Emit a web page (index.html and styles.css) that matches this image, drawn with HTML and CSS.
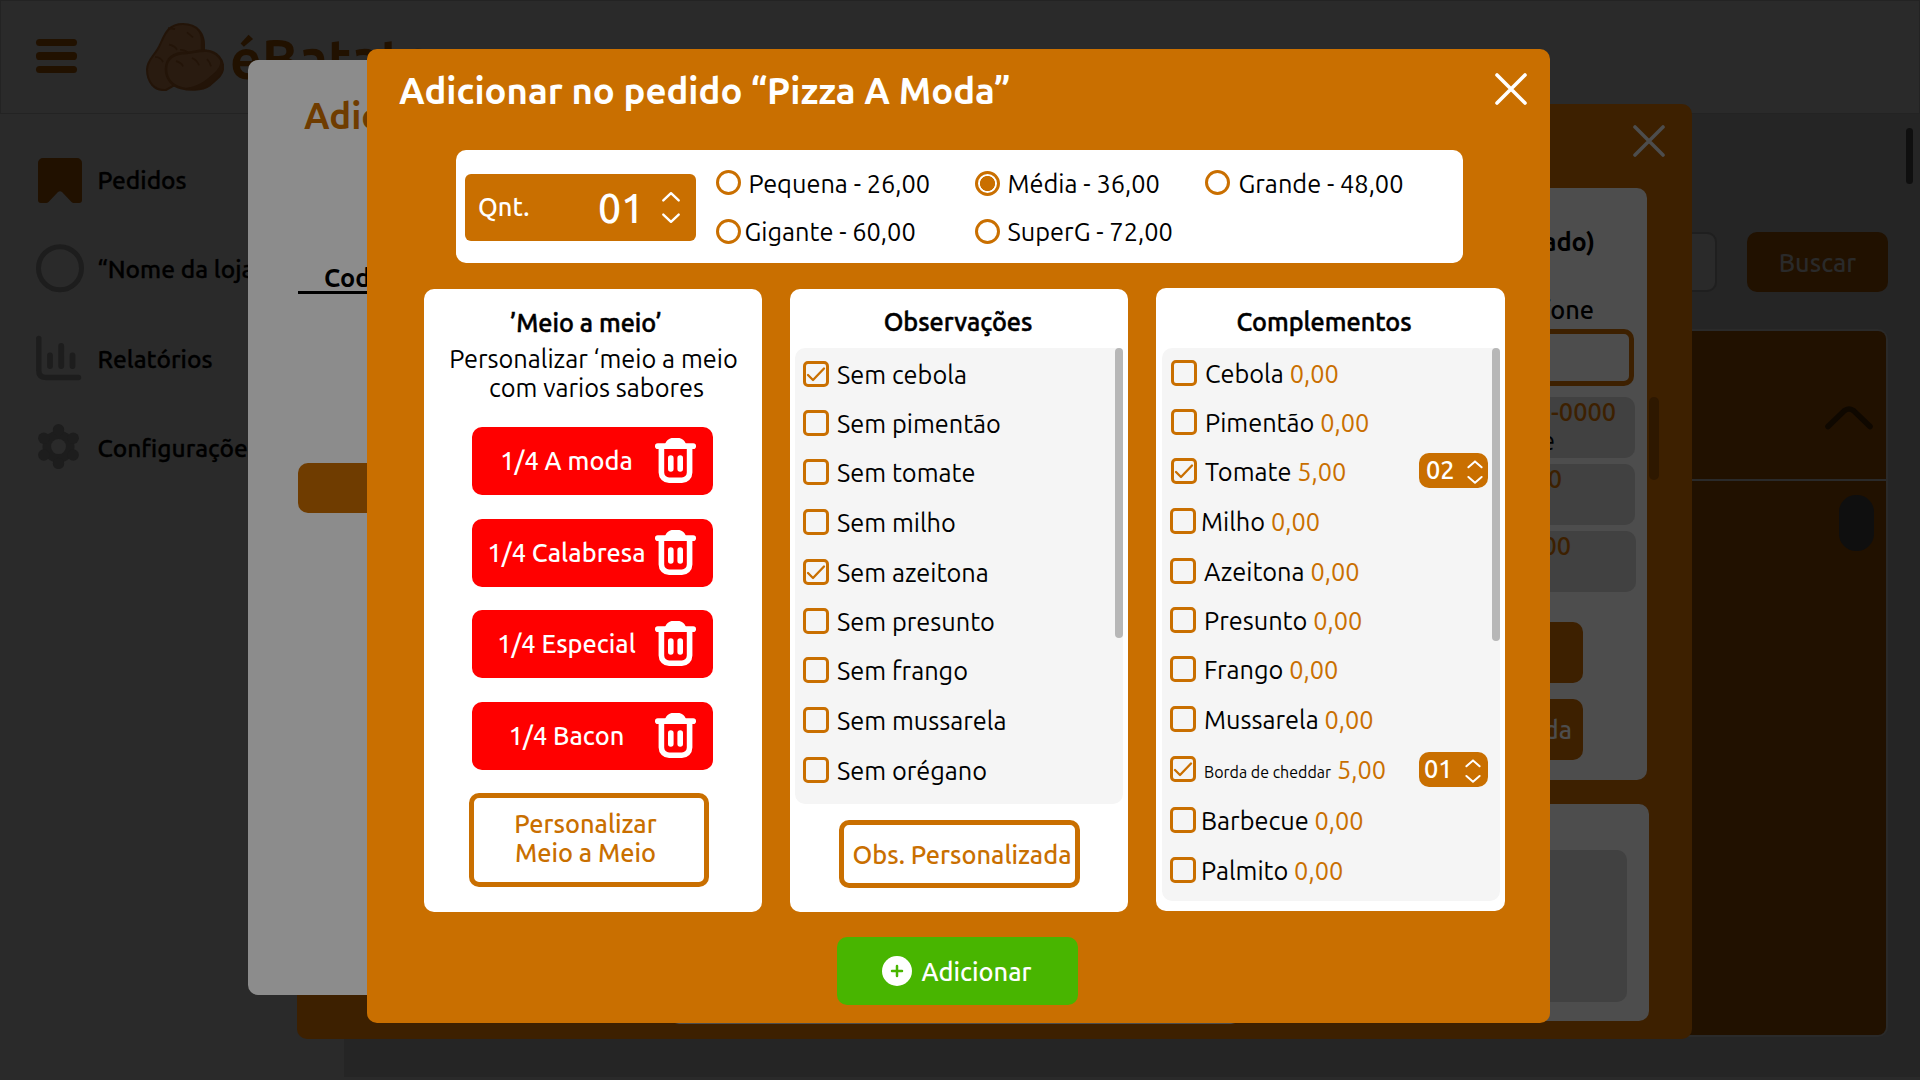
FILE: index.html
```html
<!DOCTYPE html>
<html lang="pt-BR">
<head>
<meta charset="utf-8">
<title>éBatata</title>
<link rel="stylesheet" href="styles.css">
</head>
<body>
<svg class="defs" width="0" height="0">
  <symbol id="trash" viewBox="0 0 41 45">
    <path d="M10 6C11.500 2.500 14 0 18 0h5c4 0 6.500 2.500 8 6z" fill="#fff"/>
    <rect x="0" y="5.300" width="41" height="5.700" rx="2.800" fill="#fff"/>
    <path d="M6.400 9v25.500a7.700 7.700 0 0 0 7.700 7.700h12.800a7.700 7.700 0 0 0 7.700-7.700V9" fill="none" stroke="#fff" stroke-width="5.600"/>
    <path d="M15.800 20v11M25.200 20v11" stroke="#fff" stroke-width="5.600" stroke-linecap="round"/>
  </symbol>
  <symbol id="spin" viewBox="0 0 18 30">
    <path d="M2 8.500 9 2l7 6.500M2 21.500 9 28l7-6.500" fill="none" stroke="#fff" stroke-width="2.200" stroke-linecap="round" stroke-linejoin="round"/>
  </symbol>
  <symbol id="spin-sm" viewBox="0 0 16 24">
    <path d="M1.400 7.300 8 1.400l6.600 5.900M1.400 17 8 22.700l6.600-5.700" fill="none" stroke="#fff" stroke-width="2" stroke-linecap="round" stroke-linejoin="round"/>
  </symbol>
  <symbol id="close" viewBox="0 0 32 32">
    <path d="M2 2l28 28M30 2 2 30" fill="none" stroke="currentColor" stroke-width="3.600" stroke-linecap="round"/>
  </symbol>
  <symbol id="tick" viewBox="0 0 20 20">
    <path d="M2 11l5 5L18 4.500" fill="none" stroke="#c96f00" stroke-width="2.300" stroke-linecap="round" stroke-linejoin="round"/>
  </symbol>
</svg>

<div class="app">
  <header class="topbar">
    <div class="burger"><i></i><i></i><i></i></div>
    <svg class="potato" width="78" height="68" viewBox="0 0 78 66" preserveAspectRatio="none">
      <path d="M1 45C1 36 9 31 13 23 18 14 20 1 37 1c15 0 21 10 21 20l-2 24-36 20C8 66 1 57 1 45z" fill="#291b10" stroke="#231408" stroke-width="2"/>
      <path d="M51 6c6 8 3 15 4 21l4 0c0-8-1-16-8-21z" fill="#231408"/>
      <path d="M20 45c0-12 9-16 21-16 6 0 12-3 20-2 10 1 16 9 16 16 0 7-6 11-13 17-9 6-22 5-29 3-9-2-15-9-15-18z" fill="#291b10" stroke="#231408" stroke-width="2.500"/>
      <path d="M73 32c4 8-1 14-9 20-8 7-16 10-24 11 14 4 24-2 31-9 7-6 8-14 2-22z" fill="#231408"/>
      <path d="M22 5l7 1M41 9l6 5M23 21q6 1 8 5M9 33q6 0 8 5M34 26q5 0 8 3M30 37q5 1 7 5M46 34q5 2 7 7M61 35q3 3 4 7" fill="none" stroke="#231408" stroke-width="1.600"/>
    </svg>
    <span class="brand">éBatata</span>
  </header>
  <div class="body">
    <nav class="side">
      <a><svg width="48" height="50" viewBox="0 0 48 50"><path d="M7 4h34a5 5 0 0 1 5 5v37a3 3 0 0 1-3 3h-5q-1.500 0-2.500-1L26 38q-2-1.500-4 0L12.500 48q-1 1-2.500 1H5a3 3 0 0 1-3-3V9a5 5 0 0 1 5-5z" fill="#211100"/></svg><span>Pedidos</span></a>
      <a><svg width="48" height="50" viewBox="0 0 48 50"><circle cx="24" cy="25.300" r="21.500" fill="none" stroke="#1d1d1d" stroke-width="5"/></svg><span>“Nome da loja”</span></a>
      <a><svg width="48" height="50" viewBox="0 0 48 50"><path d="M2.800 5.500v32q0 7 7 7H42.500" fill="none" stroke="#1d1d1d" stroke-width="5.400" stroke-linecap="round"/><path d="M14 22.500V33M25.200 13v20M36.500 22.500V33" stroke="#1d1d1d" stroke-width="5.800" stroke-linecap="round"/></svg><span>Relatórios</span></a>
      <a><svg width="48" height="50" viewBox="0 0 48 50"><g fill="#1d1d1d"><circle cx="22.500" cy="24.600" r="16"/><circle cx="22.500" cy="7.800" r="5.700"/><circle cx="22.500" cy="41.400" r="5.700"/><circle cx="7.800" cy="16.300" r="5.700"/><circle cx="37.200" cy="16.300" r="5.700"/><circle cx="7.800" cy="33" r="5.700"/><circle cx="37.200" cy="33" r="5.700"/></g><circle cx="22.500" cy="24.600" r="7.500" fill="#2a2a2a"/></svg><span>Configurações</span></a>
    </nav>
    <main class="main">
      <div class="searchrow"><div class="search"></div><div class="find">Buscar</div></div>
      <div class="table">
        <div class="thead"><svg width="48" height="24" viewBox="0 0 48 24"><path d="M3 20.500 19 5q5-4 10 0l16 15.500" fill="none" stroke="#0f0800" stroke-width="5.500" stroke-linecap="round"/></svg></div>
        <div class="tbody"><i></i></div>
      </div>
      <i class="pagescroll"></i>
    </main>
  </div>
</div>

<section class="order">
  <div class="order-head"><svg width="32" height="32"><use href="#close"/></svg></div>
  <div class="order-main">
    <div class="client">
      <div class="c-title">(Cadastrado)</div>
      <div class="c-label">Telefone</div>
      <div class="c-input"></div>
      <div class="c-row r1"><b>(00) 00000-0000</b><span>Nome do cliente</span></div>
      <div class="c-row r2"><b>R$ 00,00</b></div>
      <div class="c-row r3"><b>R$ 00,00</b></div>
      <div class="c-btn"></div>
      <div class="c-btn last">Personalizada</div>
    </div>
    <i class="order-scroll"></i>
  </div>
  <div class="order-foot">
    <div class="foot-left"></div>
    <div class="foot-right"><div></div></div>
  </div>
</section>

<section class="add-list">
  <h2>Adicionar</h2>
  <div class="tab">Codigo</div>
  <div class="bar"></div>
</section>

<section class="modal">
  <div class="head"><h1>Adicionar no pedido “Pizza A Moda”</h1><svg width="32" height="32"><use href="#close"/></svg></div>
  <div class="options">
    <div class="qty"><span>Qnt.</span><strong>01</strong><svg width="20" height="33"><use href="#spin"/></svg></div>
    <div class="sizes">
      <label class="top"><i></i>Pequena - 26,00</label>
      <label class="top on"><i></i>Média - 36,00</label>
      <label class="top wide"><i></i>Grande - 48,00</label>
      <label class="tight"><i></i>Gigante - 60,00</label>
      <label><i></i>SuperG - 72,00</label>
    </div>
  </div>
  <div class="cols">
    <div class="card half">
      <h3>’Meio a meio’</h3>
      <p>Personalizar ‘meio a meio<br><span>com varios sabores</span></p>
      <div class="parts">
        <div class="part"><span>1/4 A moda</span><svg width="41" height="45"><use href="#trash"/></svg></div>
        <div class="part"><span>1/4 Calabresa</span><svg width="41" height="45"><use href="#trash"/></svg></div>
        <div class="part"><span>1/4 Especial</span><svg width="41" height="45"><use href="#trash"/></svg></div>
        <div class="part"><span>1/4 Bacon</span><svg width="41" height="45"><use href="#trash"/></svg></div>
      </div>
      <div class="outline two">Personalizar<br>Meio a Meio</div>
    </div>
    <div class="card obs">
      <h3>Observações</h3>
      <div class="list">
        <div class="rows">
          <label><i><svg width="20" height="20"><use href="#tick"/></svg></i>Sem cebola</label>
          <label><i></i>Sem pimentão</label>
          <label><i></i>Sem tomate</label>
          <label><i></i>Sem milho</label>
          <label><i><svg width="20" height="20"><use href="#tick"/></svg></i>Sem azeitona</label>
          <label><i></i>Sem presunto</label>
          <label><i></i>Sem frango</label>
          <label><i></i>Sem mussarela</label>
          <label><i></i>Sem orégano</label>
        </div>
        <div class="scroll"></div>
      </div>
      <div class="outline">Obs. Personalizada</div>
    </div>
    <div class="card extras">
      <h3>Complementos</h3>
      <div class="list">
        <div class="rows">
          <label class="in"><i></i>Cebola<em> 0,00</em></label>
          <label class="in"><i></i>Pimentão<em> 0,00</em></label>
          <label class="in"><i><svg width="20" height="20"><use href="#tick"/></svg></i>Tomate<em> 5,00</em><span class="step">02<svg width="16" height="24"><use href="#spin-sm"/></svg></span></label>
          <label class="near"><i></i>Milho<em> 0,00</em></label>
          <label><i></i>Azeitona<em> 0,00</em></label>
          <label><i></i>Presunto<em> 0,00</em></label>
          <label><i></i>Frango<em> 0,00</em></label>
          <label><i></i>Mussarela<em> 0,00</em></label>
          <label><i><svg width="20" height="20"><use href="#tick"/></svg></i><small>Borda de cheddar</small><em> 5,00</em><span class="step alt">01<svg width="16" height="24"><use href="#spin-sm"/></svg></span></label>
          <label class="near"><i></i>Barbecue<em> 0,00</em></label>
          <label class="near"><i></i>Palmito<em> 0,00</em></label>
        </div>
        <div class="scroll"></div>
      </div>
    </div>
  </div>
  <div class="add"><svg width="30" height="30" viewBox="0 0 30 30"><circle cx="15" cy="15" r="15" fill="#fff"/><path d="M15 10v10M10 15h10" stroke="#48b500" stroke-width="2.500" stroke-linecap="round"/></svg>Adicionar</div>
</section>
</body>
</html>
```
FILE: styles.css
```css
* { box-sizing: border-box; margin: 0; padding: 0; }
body {
  width: 1920px; height: 1080px; overflow: hidden; position: relative;
  background: #252525; color: #000;
  font: 400 25.33px "Ubuntu", "Noto Sans", "Open Sans", sans-serif;
}
i, em { font-style: normal; }
svg { display: block; flex: none; }
.defs { position: absolute; }

/* page behind the dialogs */
.app { width: 1920px; height: 1080px; display: flex; flex-direction: column; }
.topbar { height: 114px; background: #2a2a2a; border: 1px solid #232323; display: flex; padding-left: 35px; }
.burger { width: 41px; padding-top: 38px; display: flex; flex-direction: column; gap: 6.300px; }
.burger i { height: 7.200px; border-radius: 3.600px; background: #211100; }
.potato { margin: 22px 0 0 69px; }
.brand { margin-left: 6px; font-weight: 700; font-size: 55px; line-height: 115px; height: 112px; color: #211100; }
.body { flex: 1; display: flex; }
.side {
  width: 344px; background: #2a2a2a; padding: 40px 0 0 36px; font-weight: 500; font-size: 24.500px;
  display: grid; grid-template-rows: 89px 90px 89px 50px; align-content: start;
  -webkit-text-stroke: 0.300px #000;
}
.side a { display: flex; gap: 13.500px; line-height: 52px; height: 50px; white-space: nowrap; }
.main { flex: 1; position: relative; border-bottom: 3px solid #2a2a2a; padding: 118px 32px 0 0; }
.searchrow { display: flex; justify-content: flex-end; gap: 30px; }
.search { width: 900px; height: 60px; border: 2px solid #1f1f1f; border-radius: 10px; background: #2a2a2a; }
.find { width: 141px; height: 60px; line-height: 61px; border-radius: 10px; background: #211100; color: #2a2a2a; text-align: center; font-weight: 500; }
.table { margin: 37px 0 0 30px; height: 708px; border: 2px solid #2a2a2a; border-left: 0; border-radius: 10px; background: #211100; }
.thead { height: 150px; border-bottom: 2px solid #2a2a2a; display: flex; justify-content: flex-end; padding: 75px 13px 0 0; }
.tbody { display: flex; justify-content: flex-end; padding: 14px 12px 0 0; }
.tbody i { width: 35px; height: 56px; border-radius: 17px; background: #0f0f0f; }
.pagescroll { position: absolute; right: 7px; top: 14px; width: 7px; height: 56px; border-radius: 3.500px; background: #0f0f0f; }

/* order dialog */
.order { position: absolute; left: 297px; top: 104px; width: 1395px; height: 935px; border-radius: 10px; background: #3d2000; }
.order-head { height: 84px; display: flex; justify-content: flex-end; padding: 21px 27px 0 0; color: #4d4d4d; }
.order-main { display: flex; justify-content: flex-end; padding-right: 33px; gap: 2px; height: 592px; }
.client { width: 420px; background: #4d4d4d; border-radius: 10px; text-align: right; padding: 38px 11px 0 10px; font-weight: 500; }
.c-title { font-weight: 700; line-height: 32px; height: 69px; padding-right: 41px; }
.c-label { line-height: 30px; height: 34px; padding-right: 42px; }
.c-input { height: 57px; margin: 0 2px 11px 0; border: 5px solid #3d2000; border-radius: 10px; }
.c-row { height: 61px; border-radius: 10px; background: #414141; margin: 0 1px 6px 0; line-height: 29px; display: flex; flex-direction: column; }
.c-row b { color: #3d2000; font-weight: 500; padding-right: 19px; }
.c-row span { font-weight: 400; padding-right: 80px; }
.c-row.r2 b { padding-right: 73px; }
.c-row.r3 { margin-right: 0; }
.c-row.r3 b { padding-right: 65px; }
.c-btn { width: 240px; height: 61px; border-radius: 10px; background: #3d2000; color: #4d4d4d; margin: 30px 53px 16px auto; line-height: 61px; padding-right: 11px; }
.c-btn.last { margin-top: 0; }
.order-scroll { width: 10px; height: 83px; margin-top: 209px; border-radius: 5px; background: #2e1800; }
.order-foot { display: flex; justify-content: flex-end; gap: 18px; padding: 24px 43px 0 0; }
.foot-left { width: 572px; height: 220px; border-radius: 10px; background: #4d4d4d; }
.foot-right { width: 390px; height: 217px; border-radius: 10px; background: #4d4d4d; padding: 46px 22px 0; }
.foot-right div { height: 152px; border-radius: 10px; background: #414141; }

/* item list dialog */
.add-list { position: absolute; left: 248px; top: 60px; width: 1300px; height: 935px; border-radius: 10px; background: #8c8c8c; padding: 22px 50px; }
.add-list h2 { font-size: 36.500px; line-height: 67px; height: 65px; color: #6f3c00; padding-left: 6px; }
.tab { width: 200px; height: 38px; margin-top: 109px; padding-left: 26px; line-height: 44px; border-bottom: 3px solid #000; font-weight: 700; }
.bar { height: 50px; margin-top: 169px; border-radius: 10px; background: #6f3c00; }

/* add-to-order dialog */
.modal { position: absolute; left: 367px; top: 49px; width: 1183px; height: 974px; border-radius: 10px; background: #c96f00; }
.head { height: 101px; display: flex; justify-content: space-between; padding: 0 23px 0 32px; color: #fff; }
.head h1 { font-size: 36.560px; line-height: 84px; }
.head svg { margin-top: 24px; }
.options { margin-left: 89px; width: 1007px; height: 113px; border-radius: 10px; background: #fff; display: flex; padding: 0 9px; }
.qty { width: 231px; height: 67px; margin-top: 24px; border-radius: 6px; background: #c96f00; color: #fff; display: flex; font-weight: 500; line-height: 66px; padding-left: 13px; }
.qty span { width: 120px; }
.qty strong { font-weight: 500; font-size: 41px; width: 63px; line-height: 68px; }
.qty svg { margin-top: 17px; }
.sizes { display: grid; grid-template-columns: 259px 230px 230px; grid-template-rows: 48px 25px; padding: 21px 0 0 20px; white-space: nowrap; }
.sizes label { display: flex; gap: 7.500px; line-height: 26px; height: 25px; }
.sizes i { width: 25px; height: 25px; border: 3px solid #c96f00; border-radius: 50%; flex: none; }
.sizes .top i { margin-top: -1px; }
.sizes .on i { margin-top: 0; background: radial-gradient(circle, #c96f00 7.200px, #fff 7.900px); }
.sizes .wide { gap: 8.500px; }
.sizes .tight { gap: 3.500px; }
.cols { display: flex; gap: 28px; margin: 26px 0 25px 57px; height: 623px; }
.card { width: 338px; height: 623px; border-radius: 10px; background: #fff; }
.card h3 { font-size: 25.200px; font-weight: 500; text-align: center; line-height: 54px; -webkit-text-stroke: 0.500px #000; }
.half h3 { height: 54px; padding: 7px 14px 0 0; }
.half p { text-align: center; line-height: 29px; padding: 1px 0 0 1px; }
.half p span { padding-left: 6px; }
.parts { display: grid; grid-template-rows: 92px 91px 92px 68px; margin: 25px 0 23px 48px; }
.part { width: 241px; height: 68px; border-radius: 10px; background: #f00; color: #fff; display: flex; font-weight: 500; }
.part span { width: 189px; line-height: 67px; text-align: center; }
.part svg { margin: 11px 0 0 -6px; }
.outline { width: 241px; height: 68px; border: 5px solid #c96f00; border-radius: 10px; color: #c96f00; font-weight: 500; text-align: center; white-space: nowrap; line-height: 59px; padding-left: 5px; margin: 16px 0 0 49px; }
.outline.two { width: 240px; height: 94px; margin: 0 0 0 45px; line-height: 29px; padding: 11px 7px 0 0; }
.obs h3 { height: 59px; padding: 6px 2px 0 0; }
.list { margin: 0 5px; background: #f5f5f5; border-radius: 10px 4px 10px 10px; display: flex; }
.obs .list { height: 456px; }
.rows { flex: 1; display: grid; align-content: start; padding: 13px 4px 0 8px; }
.rows label { display: flex; height: 26px; line-height: 27px; white-space: pre; }
.rows label > i { width: 26px; height: 26px; border: 3px solid #c96f00; border-radius: 5px; margin-right: 8px; flex: none; }
.obs .rows { grid-template-rows: 49px 49px 50px 50px 49px 49px 50px 50px 26px; }
.scroll { width: 8px; height: 290px; border-radius: 4px; background: #b7b7b7; }
.extras { width: 349px; margin-top: -1px; }
.extras h3 { height: 60px; padding: 7px 13px 0 0; }
.extras .list { height: 553px; margin-left: 6px; }
.extras .rows { grid-template-rows: 49px 49px 50px 50px 49px 49px 50px 50px 51px 50px 26px; padding-top: 12px; }
.extras .in { padding-left: 1px; }
.extras .rows .near > i { margin-right: 5px; }
.extras .scroll { height: 293px; }
.rows em { color: #c96f00; }
.rows small { font-size: 16px; line-height: 33px; }
.step { margin: -5px 0 -5px auto; width: 69px; height: 35px; border-radius: 10px; background: #c96f00; color: #fff; font-weight: 500; line-height: 34px; display: flex; justify-content: space-between; padding: 0 5px 0 7px; }
.step svg { margin-top: 7px; }
.step.alt { margin-top: -4px; padding: 0 7px 0 5px; }
.add { width: 241px; height: 68px; margin-left: 470px; padding-left: 45px; border-radius: 10px; background: #48b500; color: #fff; font-weight: 500; display: flex; align-items: center; gap: 9.500px; }
```
